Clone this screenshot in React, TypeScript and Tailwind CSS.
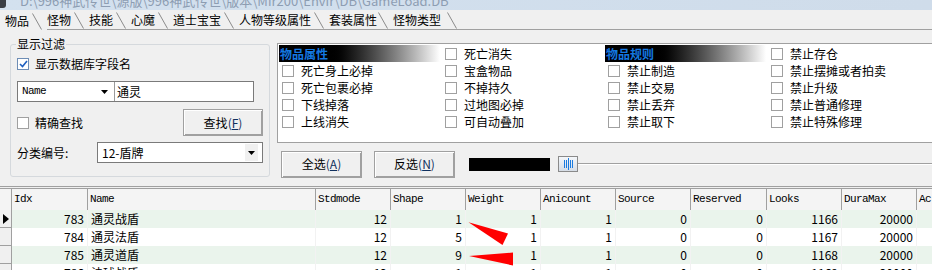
import React from 'react'

const cjk = "font-['Noto_Sans_CJK_SC','Noto_Sans',sans-serif]"
const mono = "font-['Liberation_Mono',monospace]"

const tabs = [
  { label: '物品', w: 'w-[47px]', pl: 'pl-[5px]' },
  { label: '怪物', w: 'w-[42px]', pl: 'pl-0' },
  { label: '技能', w: 'w-[42px]', pl: 'pl-0' },
  { label: '心魔', w: 'w-[42px]', pl: 'pl-0' },
  { label: '道士宝宝', w: 'w-[66px]', pl: 'pl-0' },
  { label: '人物等级属性', w: 'w-[90px]', pl: 'pl-0' },
  { label: '套装属性', w: 'w-[64px]', pl: 'pl-0' },
  { label: '怪物类型', w: 'w-[69px]', pl: 'pl-0' },
]

// 4 columns of flags, 5 rows; null means header slot
const flagCols: (string | null)[][] = [
  [null, '死亡身上必掉', '死亡包裹必掉', '下线掉落', '上线消失'],
  ['死亡消失', '宝盒物品', '不掉持久', '过地图必掉', '可自动叠加'],
  [null, '禁止制造', '禁止交易', '禁止丢弃', '禁止取下'],
  ['禁止存仓', '禁止摆摊或者拍卖', '禁止升级', '禁止普通修理', '禁止特殊修理'],
]
const headers = ['物品属性', '', '物品规则', '']

const columns = [
  { key: 'idx', label: 'Idx', w: 'w-[76px]' },
  { key: 'name', label: 'Name', w: 'w-[228px]' },
  { key: 'stdmode', label: 'Stdmode', w: 'w-[75px]' },
  { key: 'shape', label: 'Shape', w: 'w-[75px]' },
  { key: 'weight', label: 'Weight', w: 'w-[75px]' },
  { key: 'anicount', label: 'Anicount', w: 'w-[75px]' },
  { key: 'source', label: 'Source', w: 'w-[75px]' },
  { key: 'reserved', label: 'Reserved', w: 'w-[76px]' },
  { key: 'looks', label: 'Looks', w: 'w-[75px]' },
  { key: 'duramax', label: 'DuraMax', w: 'w-[75px]' },
  { key: 'ac', label: 'Ac', w: 'w-[40px]' },
]

type Row = Record<string, string>
const rows: Row[] = [
  { idx: '783', name: '通灵战盾', stdmode: '12', shape: '1', weight: '1', anicount: '1', source: '0', reserved: '0', looks: '1166', duramax: '20000', ac: '' },
  { idx: '784', name: '通灵法盾', stdmode: '12', shape: '5', weight: '1', anicount: '1', source: '0', reserved: '0', looks: '1167', duramax: '20000', ac: '' },
  { idx: '785', name: '通灵道盾', stdmode: '12', shape: '9', weight: '1', anicount: '1', source: '0', reserved: '0', looks: '1168', duramax: '20000', ac: '' },
  { idx: '786', name: '法球战盾', stdmode: '12', shape: '1', weight: '1', anicount: '1', source: '0', reserved: '0', looks: '1169', duramax: '20000', ac: '' },
]

function CheckBox({ checked = false }: { checked?: boolean }) {
  return (
    <span
      className={`flex h-[12px] w-[12px] shrink-0 items-center justify-center border bg-white ${
        checked ? 'border-[#6e8db5]' : 'border-[#a0a0a0]'
      }`}
    >
      {checked && (
        <svg width="9" height="8" viewBox="0 0 9 8">
          <path d="M1 4l2.5 2.5L8 1" fill="none" stroke="#1f5fbf" strokeWidth="1.6" />
        </svg>
      )}
    </span>
  )
}

function Arrow() {
  return (
    <svg width="7" height="4" viewBox="0 0 7 4">
      <path d="M0 0h7L3.5 4z" fill="#000" />
    </svg>
  )
}

function WinButton({ label, hot, className }: { label: string; hot: string; className: string }) {
  return (
    <div
      className={`flex items-center justify-center border border-[#a0a0a0] bg-[#f0f0f0] shadow-[inset_1px_1px_0_#ffffff,inset_-1px_-1px_0_#a0a0a0] text-[12px] text-black ${className}`}
    >
      {label}
      <span className="text-[#10305e]">
        (<span className="underline">{hot}</span>)
      </span>
    </div>
  )
}

export default function App() {
  return (
    <div className={`relative h-[270px] w-[932px] overflow-hidden bg-[#f0f0f0] ${cjk}`}>
      {/* Title bar (cut off) */}
      <div className="flex h-[10px] items-start overflow-hidden bg-gradient-to-r from-[#d3e1ef] to-[#cfdcea]">
        <div className="h-[8px] w-[6px] shrink-0 rounded-br-[3px] bg-[#3a3f46]" />
        <div className="ml-[14px] -mt-[7px] h-[17px] whitespace-nowrap text-[13px] leading-[16px] text-[#8d9db2]">
          D:\996神武传世\源版\996神武传世\版本\Mir200\Envir\DB\GameLoad.DB
        </div>
      </div>

      {/* Tabs */}
      <div className="flex h-[20px] items-end">
        {tabs.map((t, i) => (
          <div
            key={t.label}
            className={`flex h-[20px] shrink-0 items-end ${t.w} ${t.pl} ${
              i === 0 ? '' : 'border-b border-[#a0a0a0]'
            }`}
          >
            <span className="mb-[2px] text-[12px] leading-[14px] text-black">{t.label}</span>
            <svg className="ml-auto mr-[5px] shrink-0" width="10" height="17" viewBox="0 0 10 17">
              <path d="M0.5 0.5L9.5 16.5" stroke="#8a8a8a" strokeWidth="1" fill="none" />
            </svg>
          </div>
        ))}
        <div className="h-[20px] flex-1 border-b border-[#a0a0a0]" />
      </div>

      {/* Page content */}
      <div className="flex h-[156px] items-start">
        {/* Left group box */}
        <div className="relative ml-[10px] mt-[14px] h-[133px] w-[260px] rounded-[3px] border border-[#d5d9dd] px-[6px]">
          <span className="absolute -top-[8px] left-[5px] bg-[#f0f0f0] px-[1px] text-[12px] leading-[14px]">
            显示过滤
          </span>
          <div className="mt-[12px] flex h-[13px] items-center gap-[6px]">
            <CheckBox checked />
            <span className="text-[12px] leading-[14px]">显示数据库字段名</span>
          </div>
          <div className="mt-[11px] flex h-[21px] w-[237px] border border-[#7a7a7a] bg-white">
            <div className="flex w-[97px] items-center border-r border-[#9a9a9a] pl-[4px] pr-[6px]">
              <span className={`${mono} text-[11px] tracking-[-0.6px]`}>Name</span>
              <span className="ml-auto">
                <Arrow />
              </span>
            </div>
            <div className="flex items-center pl-[2px] text-[12px] leading-[14px]">通灵</div>
          </div>
          <div className="mt-[7px] flex h-[27px] items-center">
            <CheckBox />
            <span className="ml-[6px] text-[12px] leading-[14px]">精确查找</span>
            <WinButton label="查找" hot="F" className="ml-auto h-[27px] w-[80px]" />
          </div>
          <div className="mt-[6px] flex h-[21px] items-center">
            <span className="text-[12px] leading-[14px]">分类编号:</span>
            <div className="ml-auto flex h-[21px] w-[166px] items-center border border-[#7a7a7a] bg-white pl-[4px] pr-[4px]">
              <span className="text-[12px] leading-[14px]">12-盾牌</span>
              <span className="ml-auto flex h-[17px] w-[13px] items-center justify-center bg-[#f0f0f0]">
                <Arrow />
              </span>
            </div>
          </div>
        </div>

        {/* Right side */}
        <div className="ml-[7px] mt-[13px] flex flex-1 flex-col">
          <div className="h-[100px] border-l border-t border-b border-[#a0a0a0] bg-white pl-[1px] pt-[1px]">
            <div className="grid grid-cols-[163px_163px_163px_163px]">
              {flagCols.map((col, ci) => (
                <div key={ci} className="flex flex-col">
                  {col.map((item, ri) =>
                    item === null ? (
                      <div
                        key={ri}
                        className="flex h-[17px] w-[161px] items-center bg-gradient-to-r from-black from-[30%] to-white pl-[1px] text-[12px] font-bold leading-[14px] text-[#1478e0]"
                      >
                        {headers[ci]}
                      </div>
                    ) : (
                      <div key={ri} className="flex h-[17px] items-center pl-[3px]">
                        <CheckBox />
                        <span className="ml-[7px] whitespace-nowrap text-[12px] leading-[14px]">{item}</span>
                      </div>
                    )
                  )}
                </div>
              ))}
            </div>
          </div>
          <div className="mt-[7px] flex h-[28px] items-center pl-[4px]">
            <WinButton label="全选" hot="A" className="h-[27px] w-[81px]" />
            <WinButton label="反选" hot="N" className="ml-[12px] h-[27px] w-[81px]" />
            <div className="ml-[14px] h-[13px] w-[81px] bg-black" />
            {/* Trackbar */}
            <div className="ml-[8px] flex h-[16px] flex-1 items-center">
              <div className="flex h-[16px] w-[20px] items-center justify-center gap-[1px] border border-[#8a8a8a] bg-gradient-to-b from-[#f4f7fb] to-[#d6dde6]">
                <span className="h-[8px] w-[1px] bg-[#1b7be0]" />
                <span className="h-[8px] w-[1px] bg-[#1b7be0]" />
                <span className="h-[12px] w-[1px] bg-[#1b7be0]" />
                <span className="h-[8px] w-[1px] bg-[#1b7be0]" />
                <span className="h-[8px] w-[1px] bg-[#1b7be0]" />
              </div>
              <div className="h-[2px] flex-1 border-t border-[#a0a0a0] bg-white" />
            </div>
          </div>
        </div>
      </div>

      {/* Grid */}
      <div className="h-[3px] border-t border-b border-[#a0a0a0]" />
      <div className="flex h-[21px] bg-[#f4f4f4]">
        <div className="w-[12px] shrink-0 border-r border-[#a0a0a0]" />
        {columns.map((c) => (
          <div
            key={c.key}
            className={`${c.w} shrink-0 border-r border-[#a0a0a0] pl-[2px] pt-[4px] ${mono} text-[11px] leading-[13px] tracking-[-0.6px] text-black`}
          >
            {c.label}
          </div>
        ))}
      </div>
      {rows.map((r, ri) => (
        <div key={r.idx} className={`flex h-[18px] ${ri % 2 === 0 ? 'bg-[#eaf4ec]' : 'bg-white'}`}>
          <div className="flex w-[12px] shrink-0 items-center border-b border-r border-[#a0a0a0] bg-[#f0f0f0] pl-[3px]">
            {ri === 0 && (
              <svg width="6" height="10" viewBox="0 0 6 10">
                <path d="M0 0L6 5L0 10z" fill="#000" />
              </svg>
            )}
          </div>
          {columns.map((c) => (
            <div
              key={c.key}
              className={`${c.w} flex shrink-0 items-center border-r border-[#f2f2f2] text-[12px] leading-[14px] ${
                c.key === 'name' ? 'pl-[3px]' : 'justify-end pr-[3px]'
              }`}
            >
              {r[c.key]}
            </div>
          ))}
        </div>
      ))}

      {/* Red annotation arrows */}
      <svg className="pointer-events-none absolute left-0 top-0" width="932" height="270" viewBox="0 0 932 270">
        <path d="M468.5 222.3L508 233.5L502.5 245z" fill="#ff0000" />
        <path d="M469 256L513 252.5L513 265.5z" fill="#ff0000" />
      </svg>
    </div>
  )
}
